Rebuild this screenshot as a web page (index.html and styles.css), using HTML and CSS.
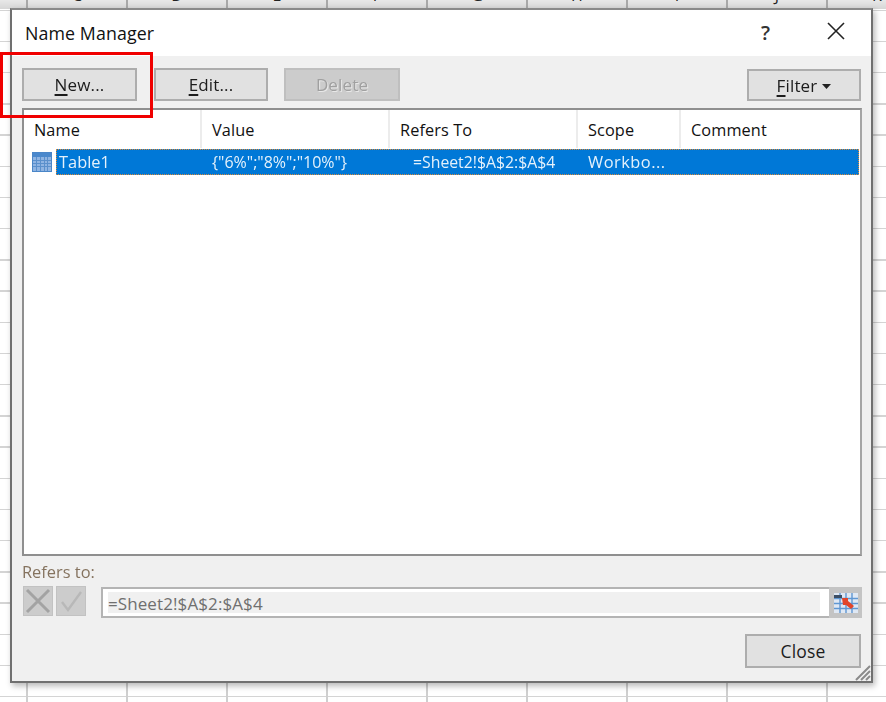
FILE: index.html
```html
<!DOCTYPE html>
<html lang="en">
<head>
<meta charset="utf-8">
<title>Name Manager</title>
<link rel="stylesheet" href="styles.css">
</head>
<body>
<div class="sheet">
  <div class="sheet-head">
    <div class="hcell hcell-first"></div>
    <div class="hcell"><span>C</span></div>
    <div class="hcell"><span>D</span></div>
    <div class="hcell"><span>E</span></div>
    <div class="hcell"><span>F</span></div>
    <div class="hcell"><span>G</span></div>
    <div class="hcell"><span>H</span></div>
    <div class="hcell"><span>I</span></div>
    <div class="hcell"><span>J</span></div>
    <div class="hcell"><span>K</span></div>
  </div>
  <div class="dialog">
    <header class="titlebar">
      <span class="title">Name Manager</span>
      <span class="help">?</span>
      <svg class="close-x" width="18" height="18" viewBox="0 0 18 18"><path d="M1 1L17 17M17 1L1 17" stroke="#222" stroke-width="1.6" fill="none"/></svg>
    </header>
    <div class="body">
      <div class="toolbar">
        <button class="btn btn-new"><u>N</u>ew...</button>
        <button class="btn btn-edit"><u>E</u>dit...</button>
        <button class="btn btn-delete">Delete</button>
        <button class="btn btn-filter"><u>F</u>ilter<svg class="caret" width="9" height="5" viewBox="0 0 9 5"><path d="M0 0H9L4.5 5Z" fill="#222"/></svg></button>
      </div>
      <div class="list">
        <div class="list-head">
          <div class="col c1">Name</div>
          <div class="col c2">Value</div>
          <div class="col c3">Refers To</div>
          <div class="col c4">Scope</div>
          <div class="col c5">Comment</div>
        </div>
        <div class="list-row">
          <svg class="table-icon" width="20" height="20" viewBox="0 0 20 20">
            <rect x="0.5" y="0.5" width="19" height="19" fill="#8fb4e2" stroke="#4a86c8"/>
            <rect x="1" y="1" width="18" height="4" fill="#4a88cc"/>
            <path d="M1 8.5H19M1 11.5H19M1 14.5H19M4.5 5V19M8.5 5V19M12.5 5V19M15.5 5V19" stroke="#5b90cc" stroke-width="1"/>
          </svg>
          <div class="selection">
            <div class="cell s1">Table1</div>
            <div class="cell s2">{"6%";"8%";"10%"}</div>
            <div class="cell s3">=Sheet2!$A$2:$A$4</div>
            <div class="cell s4">Workbo...</div>
          </div>
        </div>
      </div>
      <div class="refers-label">Refers to:</div>
      <div class="refers-row">
        <div class="icon-btn">
          <svg width="26" height="26" viewBox="0 0 26 26"><path d="M2 2L24 24M24 2L2 24" stroke="#a3a3a3" stroke-width="3" fill="none"/></svg>
        </div>
        <div class="icon-btn">
          <svg width="26" height="26" viewBox="0 0 26 26"><path d="M4 14L10 22L23 4" stroke="#b8b8b8" stroke-width="2.4" fill="none"/></svg>
        </div>
        <div class="ref-field"><div class="ref-text">=Sheet2!$A$2:$A$4</div></div>
        <div class="ref-pick">
          <svg width="24" height="20" viewBox="0 0 24 20">
            <rect x="0" y="0" width="24" height="20" fill="#dfe8f4"/>
            <path d="M0 5.5H24M0 10.5H24M0 15.5H24M6 0V20M12 0V20M18 0V20" stroke="#5f97d2" stroke-width="1.4"/>
            <rect x="0" y="2" width="8" height="3" fill="#3c4f66"/>
            <path d="M8 5H14L14 8L20 13L17 16L12 12L9 12Z" fill="#e2452a"/>
          </svg>
        </div>
      </div>
      <div class="footer">
        <button class="btn btn-close">Close</button>
      </div>
      <svg class="grip" width="16" height="16" viewBox="0 0 16 16"><path d="M15 1L1 15M15 6L6 15M15 11L11 15" stroke="#8a8a8a" stroke-width="2" fill="none"/></svg>
    </div>
  </div>
  <div class="marker"></div>
</div>
</body>
</html>
```
FILE: styles.css
```css
* { box-sizing: border-box; }
html, body { margin: 0; padding: 0; }
body {
  width: 886px;
  height: 702px;
  overflow: hidden;
  background: #fff;
  font-family: "Open Sans", "Noto Sans", sans-serif;
  color: #1c1c1c;
}
.sheet {
  position: relative;
  width: 886px;
  height: 702px;
  background-color: #fff;
  background-image:
    repeating-linear-gradient(to right, transparent 0, transparent 26px, #cfcfcf 26px, #cfcfcf 28px, transparent 28px, transparent 100px),
    repeating-linear-gradient(to bottom, transparent 0, transparent 9.6px, #d4d4d4 9.6px, #d4d4d4 11px, transparent 11px, transparent 31.2px);
}
.sheet-head {
  display: flex;
  height: 9px;
  overflow: hidden;
  background: linear-gradient(#e8e8e8, #d6d6d6);
}
.hcell {
  flex: none;
  width: 100px;
  height: 9px;
  border-left: 2px solid #a8a8a8;
  text-align: center;
  font-size: 16px;
  color: #222;
}
.hcell-first { width: 26px; border-left: 0; }
.hcell span { display: block; line-height: 0; margin-top: -5px; }
.dialog {
  position: absolute;
  left: 10px;
  top: 8px;
  width: 863px;
  height: 675px;
  border: 2px solid #707070;
  border-top-color: #8a8a8a;
  background: #f0f0f0;
  box-shadow: 2px 3px 6px rgba(0,0,0,.28);
  display: flex;
  flex-direction: column;
  filter: blur(.35px);
}
.titlebar {
  height: 46px;
  flex: none;
  background: #fff;
  display: flex;
  align-items: center;
  padding: 0 26px 0 13px;
}
.title { font-size: 17.8px; flex: 1; line-height: 44px; letter-spacing: .1px; color: #111; }
.help { font-size: 20px; font-weight: 600; color: #333; margin-right: 57px; padding-bottom: 2px; }
.close-x { display: block; margin-bottom: 5px; }
.body {
  position: relative;
  flex: 1;
  padding: 12px 9px 0 10px;
  display: flex;
  flex-direction: column;
}
.toolbar { display: flex; height: 33px; flex: none; }
.btn {
  font-family: inherit;
  font-size: 17px;
  letter-spacing: .15px;
  color: #1c1c1c;
  background: #e1e1e1;
  border: 2px solid #adadad;
  padding: 0;
  height: 33px;
  line-height: 27px;
}
.btn u { text-underline-offset: 3px; text-decoration-thickness: 2px; }
.btn-new { width: 115px; }
.btn-edit { width: 114px; margin-left: 17px; }
.btn-delete { width: 116px; margin-left: 16px; background: #cccccc; border-color: #bfbfbf; color: #a0a0a0; text-shadow: 1px 1px 0 #e8e8e8; }
.btn-filter { width: 114px; margin-left: auto; margin-right: 1px; margin-top: 1px; height: 32px; }
.caret { margin-left: 5px; vertical-align: 3px; }
.list {
  margin-top: 7px;
  height: 448px;
  flex: none;
  width: 840px;
  background: #fff;
  border: 2px solid #8f8f8f;
  border-right-color: #a5a5a5;
  display: flex;
  flex-direction: column;
}
.list-head { display: flex; height: 38px; flex: none; font-size: 16.3px; letter-spacing: .1px; color: #111; }
.col {
  padding: 8px 0 0 10px;
  border-right: 2px solid #ececec;
  line-height: 24px;
  white-space: nowrap;
}
.c1 { width: 178px; }
.c2 { width: 188px; }
.c3 { width: 188px; }
.c4 { width: 103px; }
.c5 { flex: 1; border-right: 0; }
.list-row { display: flex; align-items: center; height: 26px; margin-top: 1px; padding-left: 8px; }
.table-icon { flex: none; display: block; }
.selection {
  margin-left: 4px;
  flex: none;
  width: 803px;
  height: 26px;
  display: flex;
  background: #0078d7;
  outline: 1px dotted #d98a3a;
  outline-offset: -1px;
  color: #e4f1fb;
  font-size: 16.4px;
  line-height: 26px;
  white-space: nowrap;
}
.cell { flex: none; }
.s1 { width: 156px; padding-left: 3px; }
.s2 { width: 201px; font-size: 16px; }
.s3 { width: 175px; font-size: 15.8px; }
.s4 { flex: 1; letter-spacing: .5px; }
.refers-label {
  margin-top: 6px;
  font-size: 16.4px;
  line-height: 20px;
  color: #85735f;
}
.refers-row { display: flex; align-items: stretch; height: 31px; margin-top: 5px; padding-left: 1px; }
.icon-btn {
  width: 30px;
  height: 30px;
  margin-top: -1px;
  background: #cccccc;
  border: 1px solid #c2c2c2;
  display: flex;
  align-items: center;
  justify-content: center;
  margin-right: 3px;
}
.ref-field {
  margin-left: 12px;
  width: 729px;
  height: 31px;
  background: #fff;
  border: 2px solid #b4b4b4;
  border-right: 0;
  padding: 3px 9px 3px 5px;
}
.ref-text {
  background: #f0f0f0;
  height: 100%;
  font-size: 17px;
  letter-spacing: .1px;
  line-height: 23px;
  color: #6f6f6f;
  padding-left: 0;
}
.ref-pick {
  width: 33px;
  height: 31px;
  background: #c4c4c4;
  display: flex;
  align-items: center;
  justify-content: center;
}
.footer { display: flex; justify-content: flex-end; margin-top: 16px; padding-right: 1px; }
.btn-close { width: 116px; height: 34px; font-size: 17.5px; }
.grip { position: absolute; right: 0; bottom: 0; }
.marker {
  position: absolute;
  left: 0;
  top: 52px;
  width: 153px;
  height: 66px;
  border: 3px solid #f00000;
}
```
